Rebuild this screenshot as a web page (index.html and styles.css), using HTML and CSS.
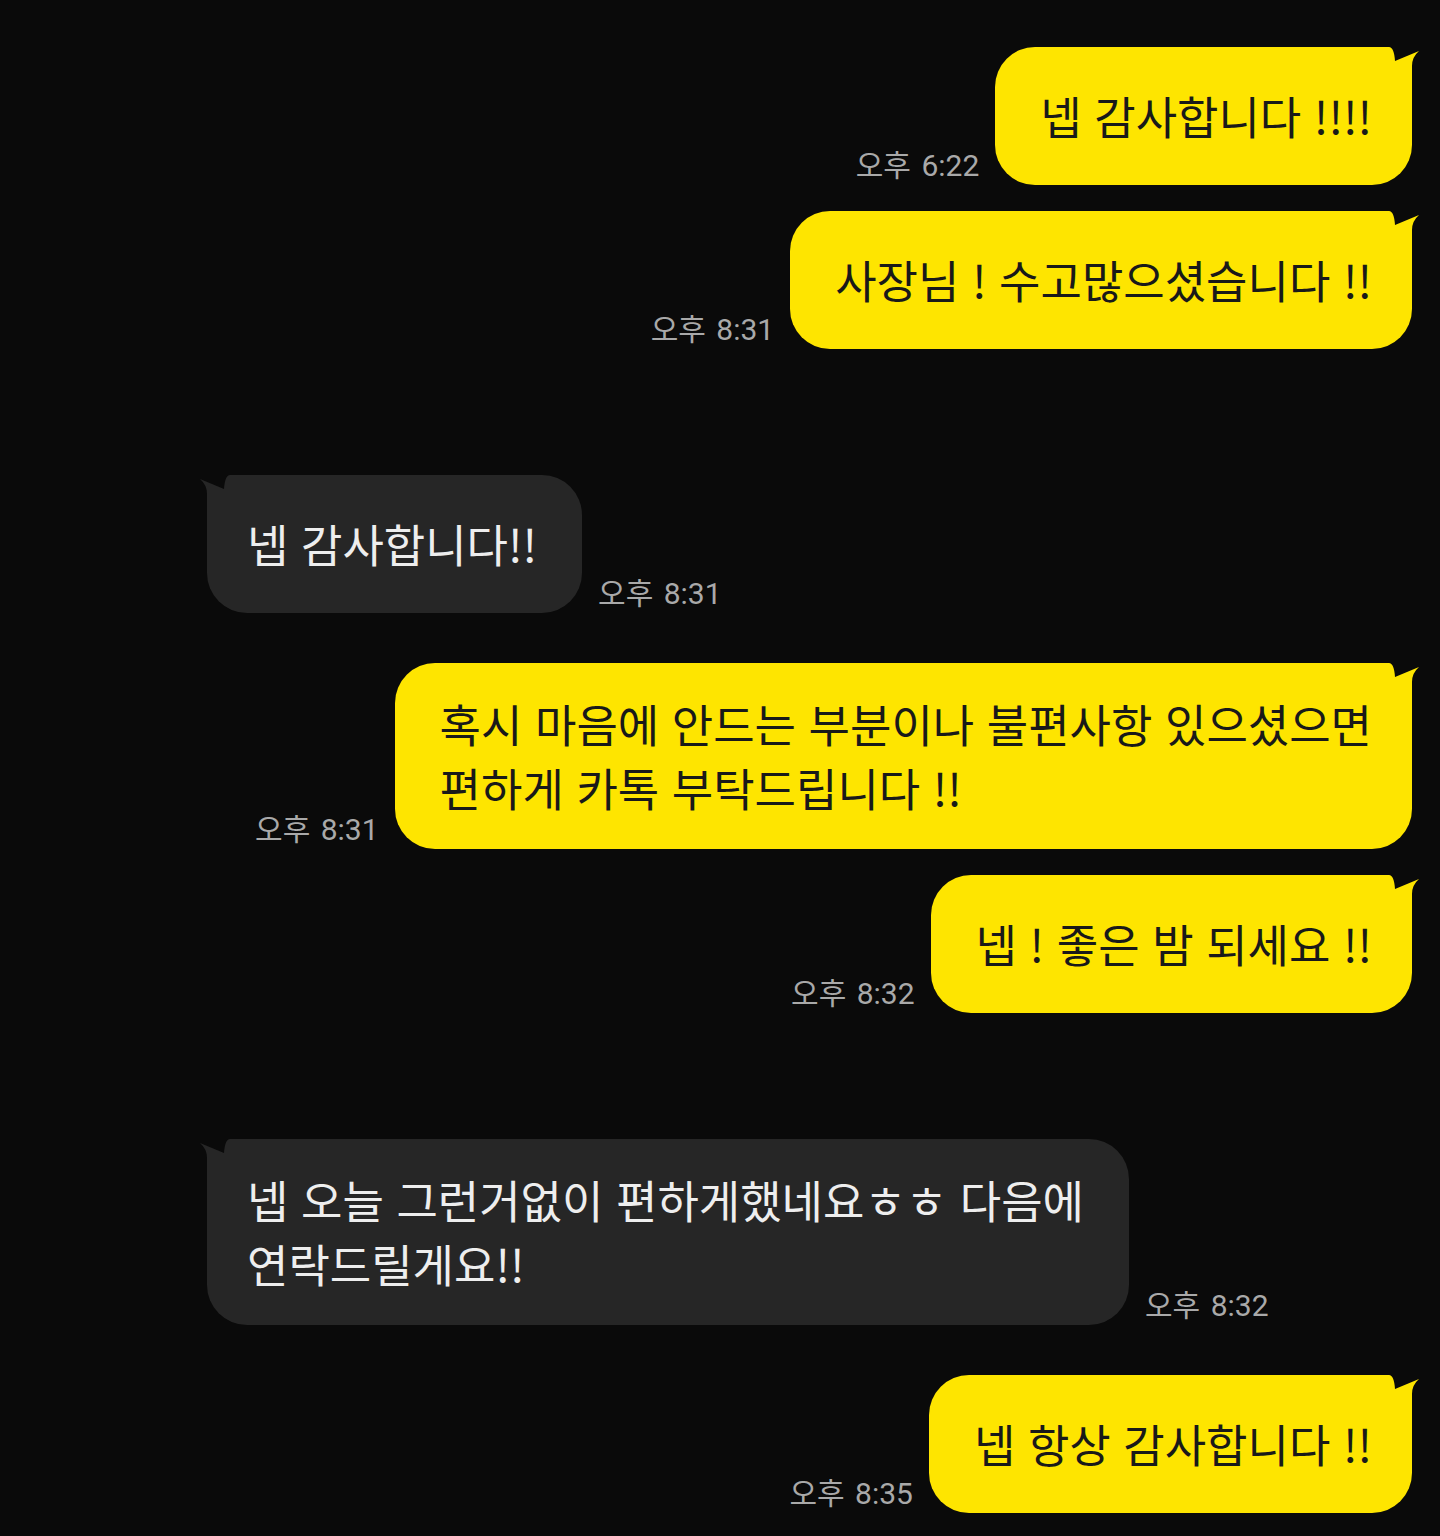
FILE: index.html
```html
<!DOCTYPE html>
<html lang="ko">
<head>
  <meta charset="UTF-8">
  <title>채팅</title>
  <link rel="stylesheet" href="styles.css">
</head>
<body>

  <main class="chat">

    <div class="row sent">
      <span class="time">오후 6:22</span>
      <div class="bubble">
        <svg class="tail" viewBox="-60 0 60 60"><path d="M-60 0 L-23 0 Q-18 0 -17 14 L7 4 Q0 10 0 19 L0 60 L-60 60 Z"/></svg>
        <span class="text">넵 감사합니다 !!!!</span>
      </div>
    </div>

    <div class="row sent">
      <span class="time">오후 8:31</span>
      <div class="bubble">
        <svg class="tail" viewBox="-60 0 60 60"><path d="M-60 0 L-23 0 Q-18 0 -17 14 L7 4 Q0 10 0 19 L0 60 L-60 60 Z"/></svg>
        <span class="text">사장님 ! 수고많으셨습니다 !!</span>
      </div>
    </div>

    <div class="row received gap-lg">
      <div class="bubble">
        <svg class="tail" viewBox="0 0 60 60"><path d="M60 0 L23 0 Q18 0 17 14 L-7 4 Q0 10 0 19 L0 60 L60 60 Z"/></svg>
        <span class="text">넵 감사합니다!!</span>
      </div>
      <span class="time">오후 8:31</span>
    </div>

    <div class="row sent gap-md">
      <span class="time">오후 8:31</span>
      <div class="bubble multi">
        <svg class="tail" viewBox="-60 0 60 60"><path d="M-60 0 L-23 0 Q-18 0 -17 14 L7 4 Q0 10 0 19 L0 60 L-60 60 Z"/></svg>
        <span class="text">혹시 마음에 안드는 부분이나 불편사항 있으셨으면<br>편하게 카톡 부탁드립니다 !!</span>
      </div>
    </div>

    <div class="row sent">
      <span class="time">오후 8:32</span>
      <div class="bubble">
        <svg class="tail" viewBox="-60 0 60 60"><path d="M-60 0 L-23 0 Q-18 0 -17 14 L7 4 Q0 10 0 19 L0 60 L-60 60 Z"/></svg>
        <span class="text">넵 ! 좋은 밤 되세요 !!</span>
      </div>
    </div>

    <div class="row received gap-lg">
      <div class="bubble multi">
        <svg class="tail" viewBox="0 0 60 60"><path d="M60 0 L23 0 Q18 0 17 14 L-7 4 Q0 10 0 19 L0 60 L60 60 Z"/></svg>
        <span class="text">넵 오늘 그런거없이 편하게했네요ㅎㅎ 다음에<br>연락드릴게요!!</span>
      </div>
      <span class="time">오후 8:32</span>
    </div>

    <div class="row sent gap-md">
      <span class="time">오후 8:35</span>
      <div class="bubble">
        <svg class="tail" viewBox="-60 0 60 60"><path d="M-60 0 L-23 0 Q-18 0 -17 14 L7 4 Q0 10 0 19 L0 60 L-60 60 Z"/></svg>
        <span class="text">넵 항상 감사합니다 !!</span>
      </div>
    </div>

  </main>

</body>
</html>
```

FILE: styles.css
```css
* {
  margin: 0;
  padding: 0;
  box-sizing: border-box;
}

:root {
  --bg-color: #0a0a0a;
  --sent-bg: #fee500;
  --sent-text: #191919;
  --received-bg: #262626;
  --received-text: #eeeeee;
  --time-color: #a9a9a9;
}

body {
  background: var(--bg-color);
  font-family: 'Noto Sans CJK KR', 'Noto Sans', sans-serif;
  min-height: 100vh;
}

.chat {
  display: flex;
  flex-direction: column;
  padding: 47px 28px 0 207px;
}

.row {
  display: flex;
  align-items: flex-end;
  gap: 16px;
  margin-top: 26px;
}

.row:first-child {
  margin-top: 0;
}

.row.gap-md {
  margin-top: 50px;
}

.row.gap-lg {
  margin-top: 126px;
}

.row.sent {
  justify-content: flex-end;
}

.bubble {
  position: relative;
  font-size: 45px;
  line-height: 64px;
  padding: 37px 40px 37px 45px;
  border-radius: 40px;
  white-space: nowrap;
}

.bubble .text {
  position: relative;
}

.bubble.multi {
  padding-top: 29px;
  padding-bottom: 29px;
}

.sent .bubble {
  background: var(--sent-bg);
  color: var(--sent-text);
  border-top-right-radius: 60px;
}

.received .bubble {
  background: var(--received-bg);
  color: var(--received-text);
  padding: 37px 45px 37px 40px;
  border-top-left-radius: 60px;
}

.received .bubble.multi {
  padding-top: 29px;
  padding-bottom: 29px;
}

.tail {
  position: absolute;
  top: 0;
  width: 60px;
  height: 60px;
  overflow: visible;
}

.sent .tail {
  right: 0;
  fill: var(--sent-bg);
}

.received .tail {
  left: 0;
  fill: var(--received-bg);
}

.time {
  color: var(--time-color);
  font-family: Roboto, 'Noto Sans CJK KR', sans-serif;
  font-size: 30px;
  line-height: 1;
  word-spacing: 3px;
  margin-bottom: 4px;
  white-space: nowrap;
}
```
